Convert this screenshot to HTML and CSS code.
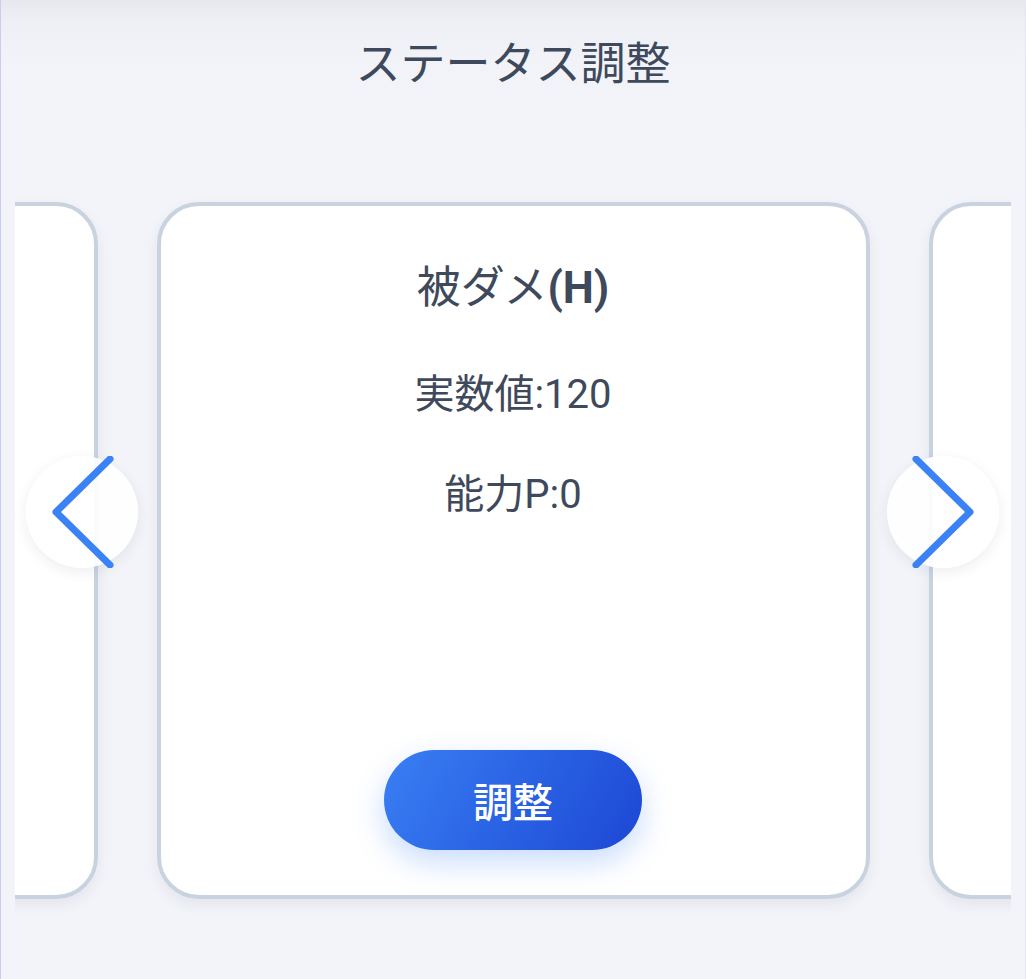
FILE: index.html
```html
<!DOCTYPE html>
<html lang="ja">
<head>
<meta charset="utf-8">
<title>ステータス調整</title>
<link rel="stylesheet" href="styles.css">
</head>
<body>
<div class="app">
  <header class="header">
    <h1 class="page-title">ステータス調整</h1>
  </header>
  <section class="carousel">
    <div class="viewport">
      <div class="track">
        <div class="card"></div>
        <div class="card card-active">
          <h2 class="card-title">被ダメ<b>(H)</b></h2>
          <p class="stat stat-first">実数値:120</p>
          <p class="stat">能力P:0</p>
          <button class="adjust-btn" type="button">調整</button>
        </div>
        <div class="card"></div>
      </div>
    </div>
    <button class="nav nav-prev" type="button" aria-label="前へ">
      <svg width="112" height="112" viewBox="0 0 112 112"><polyline points="84,3 30,56 84,109" fill="none" stroke="#3b82f6" stroke-width="7" stroke-linecap="round" stroke-linejoin="round"/></svg>
    </button>
    <button class="nav nav-next" type="button" aria-label="次へ">
      <svg width="112" height="112" viewBox="0 0 112 112"><polyline points="29,3 83,56 29,109" fill="none" stroke="#3b82f6" stroke-width="7" stroke-linecap="round" stroke-linejoin="round"/></svg>
    </button>
  </section>
</div>
</body>
</html>
```

FILE: styles.css
```css
* { box-sizing: border-box; }
html, body { margin: 0; padding: 0; }
body {
  font-family: Roboto, "Noto Sans CJK JP", sans-serif;
  color: #414b5e;
  background: #f3f4f9;
}
.app {
  width: 1026px;
  height: 979px;
  border-left: 1px solid #c9cdf3;
  border-right: 1px solid #e4e6f5;
  background: linear-gradient(180deg, #e7e8ed 0px, #eeeff4 20px, #f2f3f8 60px, #f3f4f9 140px, #f3f4f9 100%);
  overflow: hidden;
}
.header {
  height: 193px;
  display: flex;
  justify-content: center;
  padding-top: 35px;
}
.page-title {
  margin: 0;
  font-size: 45px;
  font-weight: 400;
  line-height: 60px;
  color: #3f495c;
}
.carousel {
  position: relative;
}
.viewport {
  margin: 0 14px;
  overflow: hidden;
  padding: 9px 0 30px;
}
.track {
  display: flex;
  justify-content: center;
  gap: 59px;
}
.card {
  flex: 0 0 713px;
  height: 697px;
  background: #fff;
  border: 4px solid #c9d3df;
  border-radius: 42px;
  box-shadow: 0 6px 14px rgba(30, 40, 80, 0.07);
}
.card-active {
  display: flex;
  flex-direction: column;
  align-items: center;
  padding-top: 56px;
  padding-bottom: 45px;
}
.card-title {
  margin: 0;
  font-size: 44px;
  line-height: 52px;
  font-weight: 400;
  color: #3f495c;
}
.card-title b { font-weight: 700; }
.stat {
  margin: 52px 0 0;
  font-size: 40px;
  line-height: 48px;
  color: #3f495c;
}
.stat-first { margin-top: 57px; }
.adjust-btn {
  margin-top: auto;
  width: 258px;
  height: 100px;
  border: none;
  border-radius: 50px;
  background: linear-gradient(120deg, #3a7ff3 0%, #2a63e4 50%, #1d47d4 100%);
  box-shadow: 0 12px 30px rgba(59, 130, 246, 0.28);
  color: #fff;
  font-family: Roboto, "Noto Sans CJK JP", sans-serif;
  font-size: 40px;
  font-weight: 500;
  cursor: pointer;
}
.nav {
  position: absolute;
  top: 263px;
  width: 112px;
  height: 112px;
  padding: 0;
  border: none;
  border-radius: 50%;
  background: rgba(255, 255, 255, 0.9);
  box-shadow: 0 4px 14px rgba(30, 40, 80, 0.08);
  cursor: pointer;
}
.nav svg { display: block; }
.nav-prev { left: 25px; }
.nav-next { left: 886px; }
```
